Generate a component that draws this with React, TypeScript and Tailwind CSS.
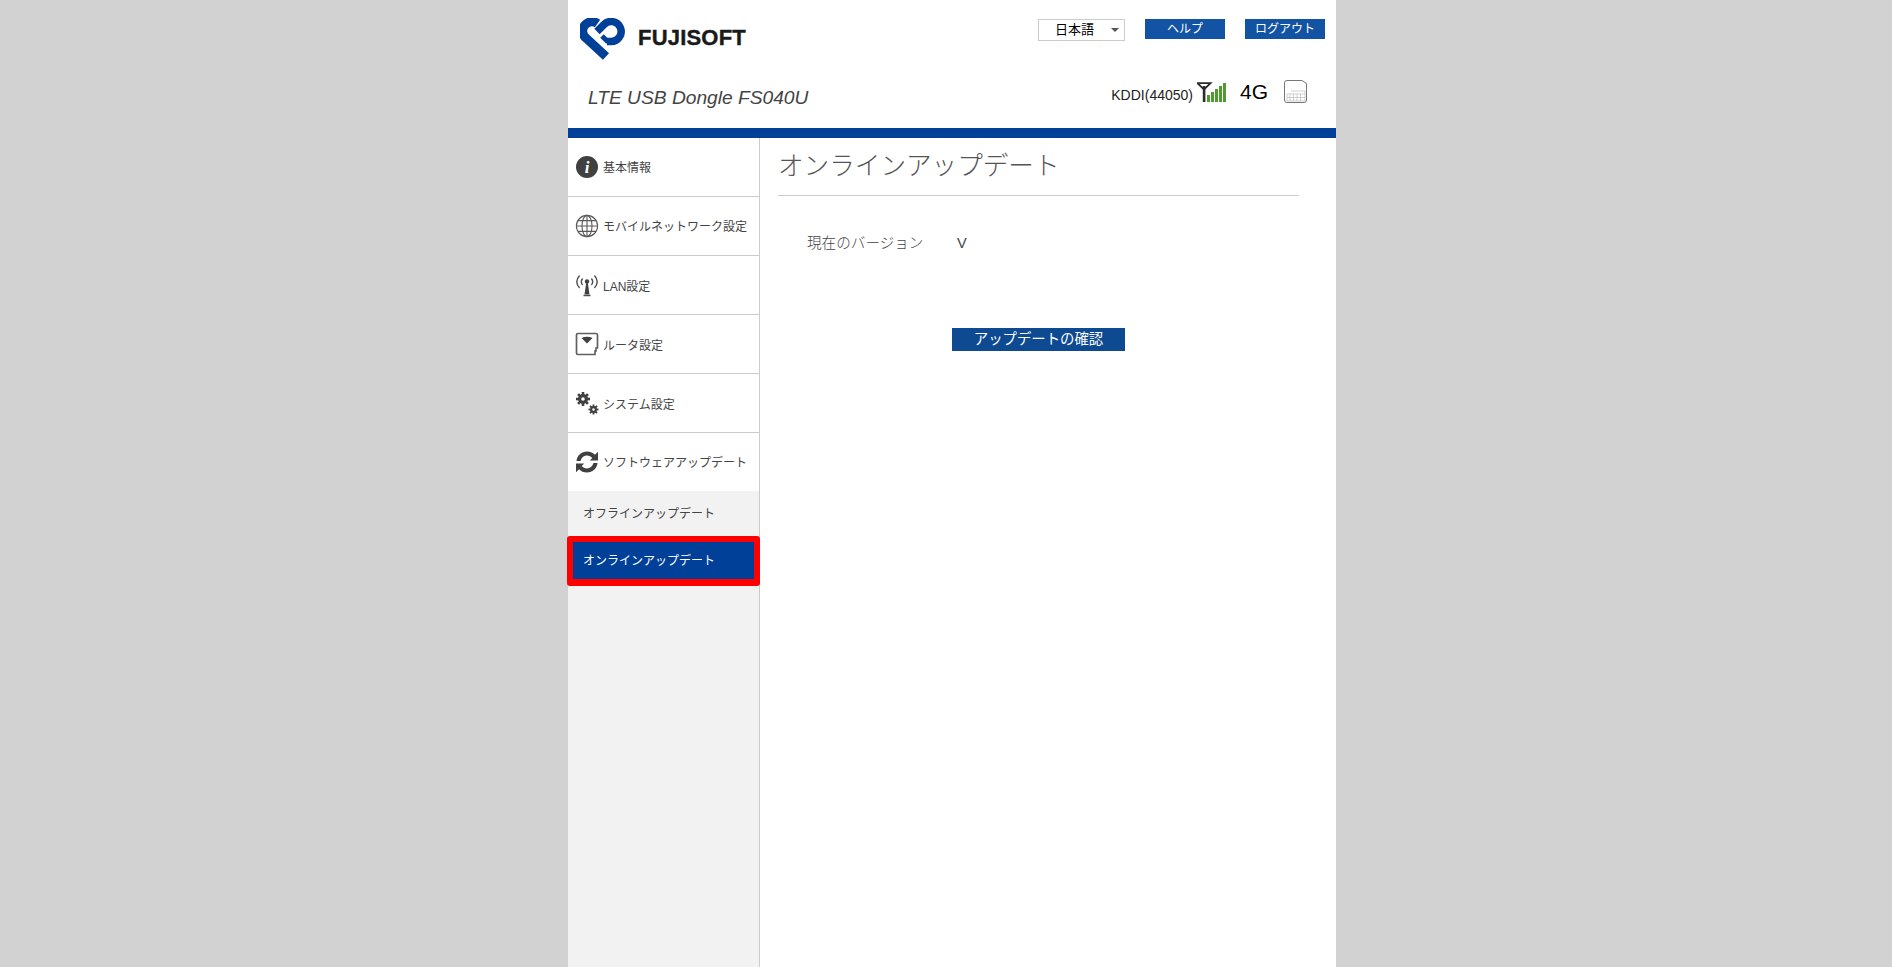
const JP = "font-['Liberation_Sans','Noto_Sans_CJK_JP',sans-serif]";

function Logo() {
  return (
    <svg width="46" height="44" viewBox="0 0 46 44" className="shrink-0" fill="none" stroke="#004098">
      <path d="M17.5 5.5 A9.3 9.3 0 0 0 6.5 20.5 L26 38.5" strokeWidth="9" />
      <path d="M27 23.5 L31 23.5 A10 10 0 1 0 24 6.5 L17 13.5" strokeWidth="7.5" />
      <path d="M22 18 L28 24" strokeWidth="5" />
    </svg>
  );
}

function InfoIcon() {
  return (
    <svg width="24" height="24" viewBox="0 0 24 24">
      <circle cx="12" cy="12" r="11" fill="#404040" />
      <text x="12" y="18" textAnchor="middle" fill="#fff" fontSize="17" fontStyle="italic" fontWeight="700" fontFamily="Liberation Serif, serif">i</text>
    </svg>
  );
}

function GlobeIcon() {
  return (
    <svg width="24" height="24" viewBox="0 0 24 24" fill="none" stroke="#5a5a5a" strokeWidth="1.1">
      <circle cx="12" cy="12" r="10.6" />
      <ellipse cx="12" cy="12" rx="5" ry="10.6" />
      <path d="M12 1.4V22.6M1.4 12H22.6M3 6.6H21M3 17.4H21" />
    </svg>
  );
}

function AntennaIcon() {
  return (
    <svg width="24" height="24" viewBox="0 0 24 24" fill="none" stroke="#505050" strokeWidth="1.4">
      <circle cx="12" cy="8.5" r="2.2" fill="#404040" stroke="none" />
      <path d="M11.2 10 L9.5 21.5 H14.5 L12.8 10 Z" fill="#404040" stroke="none" />
      <path d="M8.5 22.5 H15.5" strokeWidth="1.5" />
      <path d="M7.6 5.5 C6 7.5 6 10 7.6 12M16.4 5.5 C18 7.5 18 10 16.4 12" />
      <path d="M4.6 2.5 C1 6.5 1 11 4.6 15M19.4 2.5 C23 6.5 23 11 19.4 15" />
    </svg>
  );
}

function RouterIcon() {
  return (
    <svg width="24" height="24" viewBox="0 0 24 24" fill="none">
      <path d="M3 1.5 H21 Q22.5 1.5 22.5 3 V16 H21 V19 H20 V22.5 H3 Q1.5 22.5 1.5 21 V3 Q1.5 1.5 3 1.5 Z" stroke="#606060" strokeWidth="1.7" fill="#fff" />
      <path d="M6.5 6 Q12 3.5 17.5 6 L12 11.5 Z" fill="#404040" />
    </svg>
  );
}

function GearsIcon() {
  const teeth = (cx: number, cy: number, r: number, w: number, n: number) =>
    Array.from({ length: n }, (_, i) => (
      <rect key={i} x={cx - w / 2} y={cy - r} width={w} height={r * 2} fill="#404040" transform={`rotate(${(i * 180) / n} ${cx} ${cy})`} />
    ));
  return (
    <svg width="24" height="24" viewBox="0 0 24 24">
      {teeth(8, 8, 7, 2.6, 4)}
      <circle cx="8" cy="8" r="5" fill="#404040" />
      <circle cx="8" cy="8" r="1.8" fill="#fff" />
      {teeth(18.5, 18.5, 5, 1.8, 4)}
      <circle cx="18.5" cy="18.5" r="3.4" fill="#404040" />
      <circle cx="18.5" cy="18.5" r="1.2" fill="#fff" />
    </svg>
  );
}

function RefreshIcon() {
  return (
    <svg width="24" height="24" viewBox="0 0 24 24" fill="#404040">
      <path d="M1.5 11 C2 5.5 6.5 1.5 12 1.5 C15.5 1.5 18 2.8 20 4.8 L23 1.8 V10.5 H14.8 L17.3 8 C16 6.6 14.2 5.6 12 5.6 C9 5.6 6.4 7.8 5.6 11 Z" />
      <path d="M22.5 13 C22 18.5 17.5 22.5 12 22.5 C8.5 22.5 6 21.2 4 19.2 L1 22.2 V13.5 H9.2 L6.7 16 C8 17.4 9.8 18.4 12 18.4 C15 18.4 17.6 16.2 18.4 13 Z" />
    </svg>
  );
}

function SignalIcon() {
  const bars = [[10, 7], [14, 10], [18, 13], [22, 16], [26, 19]];
  return (
    <svg width="29" height="20" viewBox="0 0 29 20" className="block">
      <path d="M0.5 1.2 H13.5 L7 7.5 Z" stroke="#2b2b2b" strokeWidth="1.8" fill="none" />
      <rect x="5.8" y="4" width="2.6" height="16" fill="#2b2b2b" />
      {bars.map(([x, h]) => (
        <rect key={x} x={x} y={20 - h} width="3" height={h} fill="#4c9c2e" />
      ))}
    </svg>
  );
}

function SimIcon() {
  return (
    <svg width="23" height="23" viewBox="0 0 23 23" fill="none" className="block">
      <path d="M3 0.5 H18 L22.5 3.5 V20 Q22.5 22.5 20 22.5 H3 Q0.5 22.5 0.5 20 V3 Q0.5 0.5 3 0.5 Z" stroke="#777" strokeWidth="1" />
      <path d="M3 14 H21 V21 H3 Z M6 14 V21 M9.5 14 V21 M13 14 V21 M16.5 14 V21 M3 17.5 H21 M7 11 H21 V14" stroke="#bbb" strokeWidth="0.7" />
    </svg>
  );
}

const items = [
  { icon: <InfoIcon />, label: "基本情報", cls: "pt-[2px]" },
  { icon: <GlobeIcon />, label: "モバイルネットワーク設定", cls: "pt-[2px]" },
  { icon: <AntennaIcon />, label: "LAN設定", cls: "pt-[4px]" },
  { icon: <RouterIcon />, label: "ルータ設定", cls: "pt-[4px]" },
  { icon: <GearsIcon />, label: "システム設定", cls: "pt-[4px]" },
];

export default function App() {
  return (
    <div className={`${JP} h-[967px] overflow-hidden bg-[#d2d2d2] flex justify-center pl-[12px] text-[#444]`}>
      <div className="w-[768px] bg-white flex flex-col">
        <header className="h-[128px] flex justify-between">
          <div className="flex flex-col pl-[12px]">
            <div className="flex items-center h-[44px] mt-[18px] gap-[12px]">
              <Logo />
              <span className="text-[22px] font-bold text-[#1a1a1a] tracking-[0.2px] leading-none mb-[4px] [-webkit-text-stroke:0.4px_#1a1a1a]">FUJISOFT</span>
            </div>
            <div className="italic text-[19.2px] leading-[22px] pl-[8px] mt-[25px] text-[#444]">LTE USB Dongle FS040U</div>
          </div>
          <div className="flex flex-col items-end pr-[11px]">
            <div className="flex items-start gap-[20px] pt-[19px]">
              <div className="w-[87px] h-[22px] border border-[#ccc] text-[13px] text-black flex items-center justify-between pl-[16px] pr-[5px]">
                <span>日本語</span>
                <span className="w-0 h-0 border-x-[4px] border-x-transparent border-t-[4px] border-t-[#555]"></span>
              </div>
              <div className="w-[80px] h-[20px] bg-[#1353a3] text-white text-[12px] flex items-center justify-center">ヘルプ</div>
              <div className="w-[80px] h-[20px] bg-[#1353a3] text-white text-[12px] flex items-center justify-center">ログアウト</div>
            </div>
            <div className="flex items-start mt-[39px] pr-[18px] text-black">
              <span className="text-[14px] leading-[18px] text-[#222] mt-[6px]">KDDI(44050)</span>
              <span className="ml-[4px] mt-[2px]"><SignalIcon /></span>
              <span className="text-[21px] leading-[24px] ml-[14px]">4G</span>
              <span className="ml-[16px]"><SimIcon /></span>
            </div>
          </div>
        </header>
        <div className="h-[10px] bg-[#004098]"></div>
        <div className="flex flex-1">
          <nav className="w-[192px] shrink-0 bg-[#f2f2f2] border-r border-[#ccc] flex flex-col">
            {items.map((it) => (
              <div key={it.label} className="h-[59px] bg-white border-b border-[#ccc] flex items-center pl-[7px] gap-[4px] text-[12px]">
                {it.icon}
                <span className={it.cls}>{it.label}</span>
              </div>
            ))}
            <div className="h-[58px] bg-white flex items-center pl-[7px] gap-[4px] text-[12px]">
              <RefreshIcon />
              <span className="pt-[2px]">ソフトウェアアップデート</span>
            </div>
            <div className="h-[45px] flex items-center pl-[15px] text-[12px]">オフラインアップデート</div>
            <div className="relative -ml-[1px] -mr-[1px] h-[50px] border-[6px] border-b-[7px] border-[#ff0000] rounded-[3px] bg-[#004098] text-white text-[12px] flex items-center pl-[10px]">オンラインアップデート</div>
          </nav>
          <main className="flex-1 pl-[18px]">
            <div className="w-[521px] h-[58px] border-b border-[#ccc] text-[25.6px] font-light leading-[36px] pt-[10px] text-[#555]">オンラインアップデート</div>
            <div className="flex pl-[29px] mt-[37px] text-[14.6px] leading-[20px] font-light text-[#444]">
              <span className="w-[150px]">現在のバージョン</span>
              <span>V</span>
            </div>
            <div className="w-[173px] h-[23px] ml-[174px] mt-[75px] bg-[#0e4a92] text-white text-[14.4px] flex items-center justify-center">アップデートの確認</div>
          </main>
        </div>
      </div>
    </div>
  );
}
